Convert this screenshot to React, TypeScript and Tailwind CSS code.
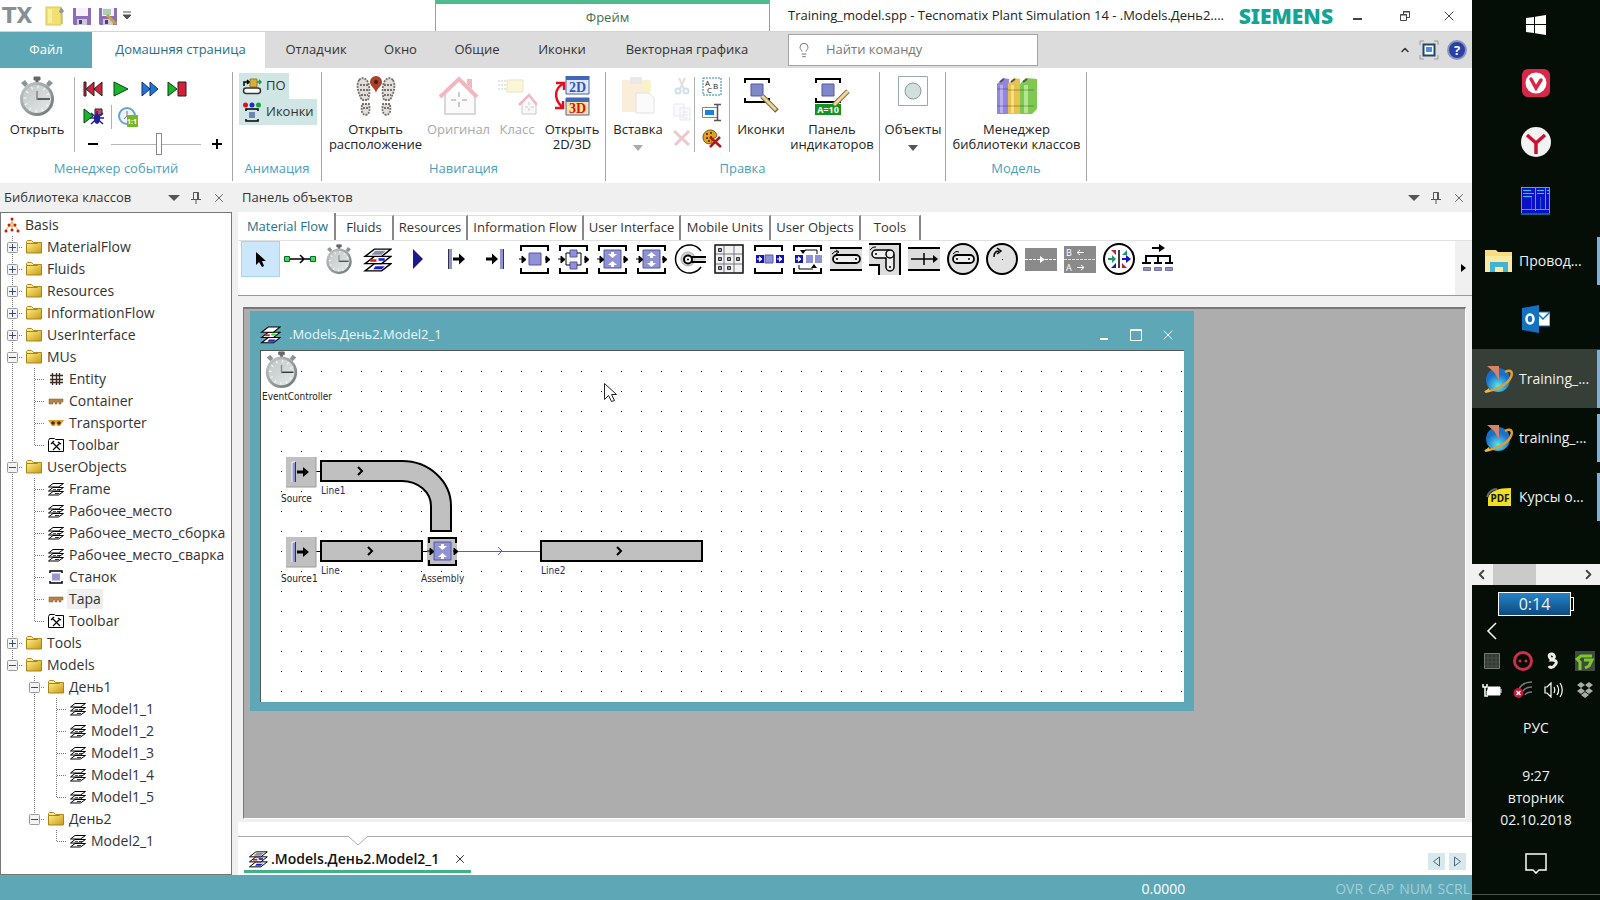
import type { ReactNode } from "react";
import { ChevronLeft, ChevronRight, ChevronUp, Lightbulb, X } from "lucide-react";

/* ---------- shared drawings ---------- */

function Stopwatch({ size }: { size: number }) {
  return (
    <svg width={size} height={size} viewBox="0 0 40 40" aria-hidden="true">
      <defs>
        <linearGradient id="dial" x1="0" y1="0" x2="1" y2="1">
          <stop offset="0" stopColor="#bcc5c4" />
          <stop offset="1" stopColor="#e6eae9" />
        </linearGradient>
        <linearGradient id="rim" x1="0" y1="0" x2="1" y2="1">
          <stop offset="0" stopColor="#c4cbca" />
          <stop offset="1" stopColor="#6c7575" />
        </linearGradient>
      </defs>
      <path d="M17 1h6v3h-2v4h-2V4h-2z" fill="#666" stroke="#666" />
      <path d="M4 7l4-3 3 4-3 3zM36 7l-4-3-3 4 3 3z" fill="#8d9494" />
      <circle cx="20" cy="23" r="15.5" fill="url(#dial)" stroke="url(#rim)" strokeWidth="3" />
      <circle cx="20" cy="23" r="12" fill="none" stroke="#f2f5f4" strokeDasharray="1.3 5" strokeWidth="3" />
      <path d="M20 23h13" stroke="#333" strokeWidth="1.5" />
      <path d="M20 24v-9" stroke="#888" strokeWidth="1.5" />
    </svg>
  );
}

function Layers({ width, light = false }: { width: number; light?: boolean }) {
  const sheet = (y: number) => `M11 ${y}h16l-9 7H2z`;
  return (
    <svg width={width} height={width} viewBox="0 0 28 28" aria-hidden="true">
      <g fill="#fff" stroke="#000" strokeWidth="1.4">
        <path d={sheet(18)} />
        <path d={sheet(11)} />
        <path d={sheet(4)} />
      </g>
      <path d="M12 20.500h9l-3 3h-8z" fill="#1a1ad0" />
      <path d="M7 15h6" stroke="#e02020" strokeWidth="2.5" />
      <path d="M15 14h6" stroke={light ? "#20e020" : "#2020d8"} strokeWidth="2.5" />
      {!light && <path d="M12 5.500h10l-4 4H8z" fill="#8a8aa0" />}
    </svg>
  );
}

function SmallLayers() {
  return (
    <svg width="16" height="16" viewBox="0 0 16 16" aria-hidden="true">
      <g fill="#fff" stroke="#000">
        <path d="M5 10.500h10.500l-5 3.500H.5z" />
        <path d="M5 6.500h10.500l-5 3.500H.5z" />
        <path d="M5 2.500h10.500l-5 3.500H.5z" />
      </g>
      <path d="M7 12.500h4" stroke="#1a1ae0" />
      <path d="M5 8.500h3" stroke="#e02020" />
      <path d="M9 8.500h3" stroke="#2020d8" />
    </svg>
  );
}

function FolderIcon() {
  return (
    <svg width="16" height="16" viewBox="0 0 16 16" aria-hidden="true">
      <defs>
        <linearGradient id="folder" x1="0" y1="0" x2="1" y2="1">
          <stop offset="0" stopColor="#fff08a" />
          <stop offset="1" stopColor="#c89a14" />
        </linearGradient>
      </defs>
      <path d="M.5 4.500V2.500l1-1h4l2 2h5v2" fill="#fbe98a" stroke="#b08a1c" />
      <path d="M.5 4.500h11l1-1h3v10.500H.5z" fill="url(#folder)" stroke="#a88418" />
    </svg>
  );
}

function Pin() {
  return (
    <svg width="12" height="14" viewBox="0 0 12 14" aria-hidden="true" fill="none" stroke="#555">
      <path d="M3.500 8V1.500h5V8M7.500 2v6M1 8.500h10M6 9v4" />
    </svg>
  );
}

function PanelButtons() {
  return (
    <div className="flex items-center gap-[10px] text-[#555]">
      <button aria-label="Меню">
        <svg width="12" height="6" viewBox="0 0 12 6"><path d="M0 0h12L6 6z" fill="#555" /></svg>
      </button>
      <button aria-label="Закрепить"><Pin /></button>
      <button aria-label="Закрыть"><X size={14} strokeWidth={1.5} /></button>
    </div>
  );
}

function Brackets({ children }: { children?: ReactNode }) {
  return (
    <>
      <path d="M3 8V3h27v5M3 25v5h27v-5" fill="none" stroke="#000" strokeWidth="2" />
      {children}
    </>
  );
}

function SideArrows() {
  return <path d="M1 16h5M27 16h4M4 13v7l4-3.500zM28 13v7l4-3.500z" fill="#000" stroke="#000" strokeWidth="1" />;
}

/* ---------- title bar ---------- */

function Floppy({ pencil = false }: { pencil?: boolean }) {
  return (
    <svg width="18" height="18" viewBox="0 0 18 18" aria-hidden="true">
      <path d="M0 1h18v17H1l-1-1z" fill="#8d6cb8" />
      <path d="M3 1h12v8H3z" fill="#f4f1fa" />
      {pencil && <path d="M4 3h8M4 5h8M4 7h8" stroke="#5dae6a" />}
      <path d="M4 12h10v6H4z" fill="#c9cbd6" />
      <path d="M6 13h3v4H6z" fill="#4d3c7d" />
      {pencil && <path d="M8 8l9 9" stroke="#c9a33c" strokeWidth="3" />}
    </svg>
  );
}

function TitleBar() {
  return (
    <header className="flex h-8 shrink-0 items-stretch border-b border-[#d4d4d4] bg-white">
      <div className="flex w-[435px] items-center">
        <svg width="36" height="30" viewBox="0 0 36 30" className="ml-px" role="img" aria-label="TX">
          <text x="1" y="22" fontSize="21" fontWeight="700" fontFamily="DejaVu Sans, sans-serif" fill="#858f96">TX</text>
        </svg>
        <button aria-label="Создать" className="ml-2">
          <svg width="20" height="20" viewBox="0 0 20 20">
            <path d="M1 1h15v18H1z" fill="#f1df72" stroke="#dcc65a" />
            <path d="M3 3h4v14H3z" fill="#f8ef9c" />
            <path d="M16 1l3 4-2 3-3-2z" fill="#8b9aa0" />
            <path d="M17 8v10" stroke="#b09a3b" />
          </svg>
        </button>
        <button aria-label="Сохранить" className="ml-2"><Floppy /></button>
        <button aria-label="Сохранить как" className="ml-2"><Floppy pencil /></button>
        <button aria-label="Настроить панель" className="ml-[6px]">
          <svg width="8" height="9" viewBox="0 0 8 9"><path d="M0 1h8M0 4h8L4 8z" fill="#555" stroke="#555" /></svg>
        </button>
      </div>
      <div className="flex w-[335px] items-center justify-center border-x border-t-4 border-x-[#5fbd97] border-t-[#4dbb8b] pl-[10px] text-[13px] text-[#41704f]">
        Фрейм
      </div>
      <div className="flex flex-1 items-center pl-[18px]">
        <h1 className="text-[13px] whitespace-nowrap text-[#222]">
          Training_model.spp - Tecnomatix Plant Simulation 14 - .Models.День2....
        </h1>
        <div className="ml-auto flex items-center">
          <span className="font-['Noto_Sans','Open_Sans',sans-serif] text-[21px] leading-5 font-black text-[#14a394]">SIEMENS</span>
          <button aria-label="Свернуть" className="ml-3 flex h-6 w-6 items-center justify-center">
            <svg width="9" height="12" viewBox="0 0 9 12"><path d="M0 9h9" stroke="#444" strokeWidth="2" /></svg>
          </button>
          <button aria-label="Восстановить" className="ml-6 flex h-6 w-6 items-center justify-center">
            <svg width="10" height="12" viewBox="0 0 10 12" fill="none" stroke="#444"><path d="M.5 4.500h6v6h-6zM3.500 4V1.500h6v6H7M3 2h7M0 5h7" /></svg>
          </button>
          <button aria-label="Закрыть" className="mr-[11px] ml-5 flex h-6 w-6 items-center justify-center text-[#444]">
            <X size={16} strokeWidth={1.5} />
          </button>
        </div>
      </div>
    </header>
  );
}

const ribbonTabs = [
  { label: "Отладчик", width: "w-[102px]" },
  { label: "Окно", width: "w-[67px]" },
  { label: "Общие", width: "w-[86px]" },
  { label: "Иконки", width: "w-[84px]" },
  { label: "Векторная графика", width: "w-[166px]" },
];

function RibbonTabs() {
  return (
    <nav className="flex h-9 shrink-0 items-stretch bg-[#dcdcdc] text-[13px] text-[#333]">
      <button className="w-[92px] bg-[#5ea7b6] text-white">Файл</button>
      <button className="w-[173px] bg-white pl-1 text-[#25708a]">Домашняя страница</button>
      {ribbonTabs.map((tab) => (
        <button key={tab.label} className={tab.width}>{tab.label}</button>
      ))}
      <label className="my-[2px] ml-[18px] flex w-[250px] items-center gap-[14px] border border-[#a3a3a3] bg-white pl-[7px]">
        <Lightbulb size={16} strokeWidth={1.5} color="#777" aria-label="Поиск" />
        <input className="w-48 outline-none placeholder:text-[#777]" placeholder="Найти команду" />
      </label>
      <div className="ml-auto flex items-center gap-2 pr-[5px]">
        <button aria-label="Свернуть ленту"><ChevronUp size={12} strokeWidth={3} /></button>
        <button aria-label="Полный экран">
          <svg width="20" height="20" viewBox="0 0 20 20">
            <path d="M1 5V1h4M15 1h4v4M19 15v4h-4M5 19H1v-4" fill="none" stroke="#999" />
            <path d="M4.500 4.500h11v11h-11z" fill="#fff" stroke="#23466e" strokeWidth="2" />
            <path d="M7 7h6v5H7z" fill="#4d8fd6" />
          </svg>
        </button>
        <button aria-label="Справка">
          <svg width="20" height="20" viewBox="0 0 20 20">
            <circle cx="10" cy="10" r="9" fill="#2b3fa8" stroke="#8797bd" strokeWidth="2" />
            <text x="10" y="15" fontSize="13" fontWeight="700" textAnchor="middle" fill="#fff">?</text>
          </svg>
        </button>
      </div>
    </nav>
  );
}

/* ---------- ribbon ---------- */

function Group({ label, width, children }: { label?: string; width: string; children: ReactNode }) {
  return (
    <section className={`flex h-[109px] flex-col border-r border-[#a6a6a6] ${width}`}>
      <div className="flex h-[85px]">{children}</div>
      <div className="flex h-6 items-center justify-center text-[13px] text-[#4a9fbd]">{label}</div>
    </section>
  );
}

interface BigButtonProps {
  icon: ReactNode;
  lines: string[];
  width: string;
  disabled?: boolean;
  dimmed?: boolean;
  arrow?: string;
}

function BigButton({ icon, lines, width, disabled, dimmed = disabled, arrow }: BigButtonProps) {
  return (
    <button disabled={disabled} className={`flex shrink-0 flex-col items-center pt-1 text-[13px] leading-[15px] whitespace-nowrap text-[#222] disabled:text-[#aaa] ${width}`}>
      <span className={dimmed ? "mb-[6px] flex h-10 items-center opacity-30" : "mb-[6px] flex h-10 items-center"}>{icon}</span>
      {lines.map((line) => <span key={line}>{line}</span>)}
      {arrow && <svg width="10" height="6" viewBox="0 0 10 6" className="mt-2"><path d="M0 0h10L5 6z" fill={arrow} /></svg>}
    </button>
  );
}

function Separator() {
  return <div className="mt-[5px] h-[75px] w-px shrink-0 bg-[#b0b0b0]" />;
}

const house = (
  <svg width="40" height="40" viewBox="0 0 40 40">
    <path d="M6 18v20h30V18" fill="#f5f5f5" stroke="#555" strokeWidth="1.5" />
    <path d="M1 21L20 3l18 18" fill="none" stroke="#d41734" strokeWidth="4" />
    <path d="M28 3h5v10l-5-5z" fill="#d41734" />
    <path d="M20 16v5M20 26v5M12 24h5M23 24h5" stroke="#555" strokeWidth="2" />
  </svg>
);

const classIcon = (
  <svg width="40" height="40" viewBox="0 0 40 40">
    <path d="M1 5h8M1 9h8M1 13h8" stroke="#aaa" strokeWidth="2" strokeDasharray="2 1" />
    <path d="M10 4h16v12H10z" fill="#f2e47c" stroke="#b8a544" />
    <path d="M25 26v12h14V26" fill="#eee" stroke="#555" />
    <path d="M22 29l10-10 8 10" fill="none" stroke="#c2183b" strokeWidth="2.5" />
    <path d="M32 26v3M32 32v3M28 31h3M34 31h3" stroke="#555" />
  </svg>
);

const footprints = (
  <svg width="40" height="40" viewBox="0 0 40 40">
    <g fill="#e2dedc" stroke="#77706d" strokeWidth="1.8" strokeDasharray="2 1">
      <path d="M3 4c4-4 9-1 10 6 1 7 0 11-1 14H6C2 17 0 9 3 4zM6 28h7c1 5 1 10-3 11-4 0-5-4-4-11zM37 4c-4-4-9-1-10 6-1 7 0 11 1 14h6c4-7 6-15 3-20zM34 28h-7c-1 5-1 10 3 11 4 0 5-4 4-11z" />
      <path d="M4 9h8M4 14h8M5 19h7M7 32h5M28 9h8M28 14h8M28 19h7M28 32h5" />
    </g>
    <path d="M20 17c-1-5-6-7-6-11a6 6 0 0112 0c0 4-5 6-6 11z" fill="#a8432a" />
    <circle cx="20" cy="6" r="2" fill="#4b1b12" />
  </svg>
);

const open2d3d = (
  <svg width="36" height="40" viewBox="0 0 36 40">
    <path d="M12 0h23v18H12z" fill="#e3e9f8" stroke="#4463ac" />
    <path d="M12 0h23v4H12z" fill="#3f68b8" />
    <path d="M12 22h23v17H12z" fill="#f8e3a0" stroke="#4463ac" />
    <path d="M12 22h23v4H12z" fill="#3f68b8" />
    <text x="23.5" y="16" fontSize="14" fontWeight="700" textAnchor="middle" fontFamily="Liberation Serif, serif" fill="#3358b8">2D</text>
    <text x="23.5" y="37" fontSize="14" fontWeight="700" textAnchor="middle" fontFamily="Liberation Serif, serif" fill="#e01010">3D</text>
    <path d="M9 8C1 12-1 22 8 31M2 7h8v7M1 32h8v-7" fill="none" stroke="#e01020" strokeWidth="2.5" />
  </svg>
);

const paste = (
  <svg width="34" height="40" viewBox="0 0 34 40">
    <path d="M1 4h28v32H1z" fill="#f0c888" />
    <path d="M9 1h12v7H9z" fill="#b8b8b8" />
    <path d="M22 5h8v10h-8z" fill="#e8d840" />
    <path d="M15 17h13l5 5v15H15z" fill="#f2f4f8" stroke="#98a0b0" />
  </svg>
);

function EditorIcon({ indicator = false }: { indicator?: boolean }) {
  return (
    <svg width="36" height="40" viewBox="0 0 36 40">
      <path d="M2 7V3h24v4M2 22v4h24v-4" fill="none" stroke="#000" strokeWidth="2" />
      <path d="M8 8h12v12H8z" fill="#8088c8" stroke="#5259a5" />
      {indicator ? (
        <>
          <path d="M1 28h26v11H1z" fill="#129422" />
          <text x="14" y="37" fontSize="9" fontWeight="700" textAnchor="middle" fill="#fff">A=10</text>
          <path d="M34 15L20 29" stroke="#8a6a3e" strokeWidth="5" />
          <path d="M34 15L20 29" stroke="#f0d79c" strokeWidth="3" />
        </>
      ) : (
        <>
          <path d="M19 20l15 15" stroke="#7a6436" strokeWidth="5" />
          <path d="M19 20l14 14" stroke="#ead59a" strokeWidth="3" />
        </>
      )}
    </svg>
  );
}

const books = (
  <svg width="42" height="38" viewBox="0 0 42 38">
    <path d="M1 7l6-6 6 1-1 35H1z" fill="#9386dc" />
    <path d="M4 8h3v28H4z" fill="#b9b0f0" />
    <path d="M12 7l6-6 6 1v35H12z" fill="#e6c24e" />
    <path d="M15 8h3v28h-3z" fill="#f6df8c" />
    <path d="M24 7l6-6 11 1v30l-5 5H24z" fill="#7fc852" />
    <path d="M28 8h4v28h-4z" fill="#b4e68e" />
    <path d="M4 5l4-3M15 5l4-3M27 5l4-3" stroke="#555" strokeWidth="2" />
    <path d="M1 12h11M1 29h11M12 13h12M12 29h12M24 13h14M24 29h14" stroke="#00000030" strokeWidth="1.5" />
  </svg>
);

function EventManager() {
  return (
    <Group label="Менеджер событий" width="w-[233px]">
      <BigButton icon={<Stopwatch size={40} />} lines={["Открыть"]} width="w-[74px]" />
      <Separator />
      <div className="flex flex-1 flex-col pl-2">
        <div className="mt-[8px] flex gap-2">
          <button aria-label="Сброс">
            <svg width="20" height="18" viewBox="0 0 20 18"><path d="M1 2h2v14H1zM3 9l8-7v14zM11 9l8-7v14z" fill="#d5203a" stroke="#222" /></svg>
          </button>
          <button aria-label="Пуск">
            <svg width="20" height="18" viewBox="0 0 20 18"><path d="M3 2l14 7-14 7z" fill="#14b82a" stroke="#123c16" /></svg>
          </button>
          <button aria-label="Быстро">
            <svg width="20" height="18" viewBox="0 0 20 18"><path d="M3 2l8 7-8 7zM11 2l8 7-8 7z" fill="#1e74d8" stroke="#12305c" /></svg>
          </button>
          <button aria-label="Шаг">
            <svg width="20" height="18" viewBox="0 0 20 18"><path d="M1 2l9 7-9 7z" fill="#14b82a" stroke="#123c16" /><path d="M11 2h8v14h-8z" fill="#d5203a" stroke="#222" /></svg>
          </button>
        </div>
        <div className="mt-[7px] flex h-6 items-center">
          <button aria-label="Отладка">
            <svg width="22" height="18" viewBox="0 0 22 18">
              <path d="M1 1l9 7-9 7z" fill="#14b82a" stroke="#123c16" />
              <path d="M12 1h7v6h-7z" fill="#d5405a" stroke="#222" />
              <path d="M8 5l12 11M20 5L8 16M7 10h14M14 3v3" stroke="#20209a" strokeWidth="1.5" />
              <ellipse cx="14" cy="11" rx="3" ry="5" fill="#20209a" />
            </svg>
          </button>
          <div className="mx-[6px] h-6 w-px bg-[#b0b0b0]" />
          <button aria-label="Реальное время">
            <svg width="20" height="20" viewBox="0 0 20 20">
              <circle cx="9" cy="9" r="8" fill="#eef5f8" stroke="#6aa3cd" strokeWidth="2" />
              <path d="M9 4v5l-3 3" fill="none" stroke="#777" />
              <path d="M9 8h11v12H9z" fill="#76b82a" />
              <text x="14" y="17" fontSize="7" fontWeight="700" textAnchor="middle" fill="#fff">1:1</text>
            </svg>
          </button>
        </div>
        <div className="mt-[3px] flex h-6 items-center">
          <button aria-label="Медленнее" className="flex w-5 justify-center"><svg width="10" height="2"><path d="M0 1h10" stroke="#000" strokeWidth="2" /></svg></button>
          <input
            type="range"
            aria-label="Скорость"
            defaultValue={54}
            className="ml-2 h-[22px] w-[90px] appearance-none bg-[linear-gradient(#b4b4b4,#b4b4b4)] bg-[length:100%_1px] bg-center bg-no-repeat [&::-webkit-slider-thumb]:h-[22px] [&::-webkit-slider-thumb]:w-[6px] [&::-webkit-slider-thumb]:appearance-none [&::-webkit-slider-thumb]:border [&::-webkit-slider-thumb]:border-[#888] [&::-webkit-slider-thumb]:bg-white"
          />
          <button aria-label="Быстрее" className="ml-[10px]"><svg width="12" height="12"><path d="M1 6h10M6 1v10" stroke="#000" strokeWidth="2" /></svg></button>
        </div>
      </div>
    </Group>
  );
}

function Ribbon() {
  return (
    <div className="flex h-[115px] shrink-0 bg-white pt-1">
      <EventManager />
      <Group label="Анимация" width="w-[89px]">
        <div className="mt-px ml-[6px] flex flex-col items-start text-[13px] text-[#333]">
          <button aria-pressed="true" className="flex h-[26px] items-center gap-1 bg-[#cfe6e5] px-[3px]">
            <svg width="20" height="18" viewBox="0 0 20 18">
              <path d="M8 2h7v8H8z" fill="#d6b03c" stroke="#9a7a20" />
              <path d="M2 9V5h5M5 3l2 2-2 2" fill="none" stroke="#000" strokeWidth="1.5" />
              <path d="M15 5h4M17 3l2 2-2 2" fill="none" stroke="#1a9850" strokeWidth="1.5" />
              <rect x="1.5" y="11" width="17" height="5.5" rx="2.7" fill="#fff" stroke="#333" strokeWidth="1.5" />
            </svg>
            ПО
          </button>
          <button aria-pressed="true" className="flex h-[26px] items-center gap-1 bg-[#cfe6e5] px-[3px]">
            <svg width="20" height="20" viewBox="0 0 20 20">
              <circle cx="3.5" cy="3" r="2.5" fill="#e01020" />
              <circle cx="10" cy="3" r="2.5" fill="#1430d0" />
              <circle cx="16.5" cy="3" r="2.5" fill="#12a83a" />
              <path d="M4 9V7h12v2M4 17v2h12v-2" fill="none" stroke="#000" strokeWidth="1.5" />
              <path d="M7 10h6v6H7z" fill="#6a86b8" />
            </svg>
            Иконки
          </button>
        </div>
      </Group>
      <Group label="Навигация" width="w-[284px]">
        <BigButton icon={footprints} lines={["Открыть", "расположение"]} width="w-[107px]" />
        <BigButton icon={house} lines={["Оригинал"]} width="w-[59px]" disabled />
        <BigButton icon={classIcon} lines={["Класс"]} width="w-[58px]" disabled />
        <BigButton icon={open2d3d} lines={["Открыть", "2D/3D"]} width="w-[52px]" />
      </Group>
      <Group label="Правка" width="w-[274px]">
        <BigButton icon={paste} lines={["Вставка"]} width="w-16" dimmed arrow="#aaa" />
        <div className="flex w-6 flex-col items-center gap-2 pt-[5px] opacity-25">
          <button disabled aria-label="Вырезать">
            <svg width="16" height="18" viewBox="0 0 16 18" fill="none" stroke="#3c8fb8" strokeWidth="2"><path d="M5 1l5 11M11 1L6 12" stroke="#888" /><circle cx="4" cy="14" r="2.5" /><circle cx="12" cy="14" r="2.5" /></svg>
          </button>
          <button disabled aria-label="Копировать">
            <svg width="18" height="18" viewBox="0 0 18 18" fill="#eef" stroke="#aab"><path d="M1 1h10v12H1zM7 5h10v12H7zM9 9h6M9 12h6M9 15h6" /></svg>
          </button>
          <button disabled aria-label="Удалить">
            <svg width="18" height="18" viewBox="0 0 18 18"><path d="M1 2l15 14M16 2L2 16" stroke="#c02038" strokeWidth="3" /></svg>
          </button>
        </div>
        <Separator />
        <div className="flex w-[34px] flex-col items-center gap-[7px] pt-[5px]">
          <button aria-label="Выделить всё">
            <svg width="20" height="19" viewBox="0 0 20 19">
              <path d="M1 1h18v17H1z" fill="#fff" stroke="#2388a0" strokeDasharray="2 1" />
              <text x="3" y="9" fontSize="8" fill="#222">A</text>
              <text x="11" y="12" fontSize="8" fill="#222">B</text>
              <text x="5" y="16" fontSize="8" fill="#222">C</text>
            </svg>
          </button>
          <button aria-label="Переименовать">
            <svg width="20" height="19" viewBox="0 0 20 19">
              <path d="M.5 4.500h15v10H.5z" fill="#fff" stroke="#789" />
              <path d="M3 7h9v5H3z" fill="#1583e0" />
              <path d="M12 1.500h7M12 17.500h7M15.500 2v15" stroke="#555" strokeWidth="1.5" />
            </svg>
          </button>
          <button aria-label="Очистить">
            <svg width="20" height="19" viewBox="0 0 20 19">
              <path d="M1 8C1 3 7-1 12 2c4 3 3 6 1 7-3 0-3 2-3 5-4 2-9 0-9-6z" fill="#d9a520" stroke="#7c5a10" />
              <path d="M4 5h2M8 4h2M4 9h2M8 8h2M6 12h2" stroke="#8a3010" strokeWidth="2" />
              <path d="M8 8l11 10M18 8L8 18" stroke="#b01818" strokeWidth="2.5" />
            </svg>
          </button>
        </div>
        <Separator />
        <BigButton icon={<EditorIcon />} lines={["Иконки"]} width="w-[62px]" />
        <BigButton icon={<EditorIcon indicator />} lines={["Панель", "индикаторов"]} width="w-[80px]" />
      </Group>
      <Group width="w-[66px]">
        <BigButton
          icon={
            <svg width="30" height="30" viewBox="0 0 30 30" className="mb-[10px]">
              <path d="M.5.5h29v29H.5z" fill="#fff" stroke="#9aa" />
              <circle cx="15" cy="15" r="8" fill="#d0e0dc" stroke="#8a9a98" />
            </svg>
          }
          lines={["Объекты"]}
          width="w-[66px]"
          arrow="#555"
        />
      </Group>
      <Group label="Модель" width="w-[141px]">
        <BigButton icon={books} lines={["Менеджер", "библиотеки классов"]} width="w-[141px]" />
      </Group>
    </div>
  );
}

/* ---------- class library tree ---------- */

type IconKind = "folder" | "frame" | "entity" | "container" | "transporter" | "toolbar" | "station" | "basis";

interface TreeRow {
  // one guide character per level: | through, T branch, L last branch, space nothing
  guides: string;
  icon: IconKind;
  label: string;
  box?: "+" | "-";
  selected?: boolean;
}

const tree: TreeRow[] = [
  { guides: "", icon: "basis", label: "Basis" },
  { guides: "T", icon: "folder", label: "MaterialFlow", box: "+" },
  { guides: "T", icon: "folder", label: "Fluids", box: "+" },
  { guides: "T", icon: "folder", label: "Resources", box: "+" },
  { guides: "T", icon: "folder", label: "InformationFlow", box: "+" },
  { guides: "T", icon: "folder", label: "UserInterface", box: "+" },
  { guides: "T", icon: "folder", label: "MUs", box: "-" },
  { guides: "|T", icon: "entity", label: "Entity" },
  { guides: "|T", icon: "container", label: "Container" },
  { guides: "|T", icon: "transporter", label: "Transporter" },
  { guides: "|L", icon: "toolbar", label: "Toolbar" },
  { guides: "T", icon: "folder", label: "UserObjects", box: "-" },
  { guides: "|T", icon: "frame", label: "Frame" },
  { guides: "|T", icon: "frame", label: "Рабочее_место" },
  { guides: "|T", icon: "frame", label: "Рабочее_место_сборка" },
  { guides: "|T", icon: "frame", label: "Рабочее_место_сварка" },
  { guides: "|T", icon: "station", label: "Станок" },
  { guides: "|T", icon: "container", label: "Тара", selected: true },
  { guides: "|L", icon: "toolbar", label: "Toolbar" },
  { guides: "T", icon: "folder", label: "Tools", box: "+" },
  { guides: "L", icon: "folder", label: "Models", box: "-" },
  { guides: " T", icon: "folder", label: "День1", box: "-" },
  { guides: " |T", icon: "frame", label: "Model1_1" },
  { guides: " |T", icon: "frame", label: "Model1_2" },
  { guides: " |T", icon: "frame", label: "Model1_3" },
  { guides: " |T", icon: "frame", label: "Model1_4" },
  { guides: " |L", icon: "frame", label: "Model1_5" },
  { guides: " L", icon: "folder", label: "День2", box: "-" },
  { guides: "  L", icon: "frame", label: "Model2_1" },
];

function TreeIcon({ kind }: { kind: IconKind }) {
  switch (kind) {
    case "folder":
      return <FolderIcon />;
    case "frame":
      return <SmallLayers />;
    case "entity":
      return <svg width="16" height="16" viewBox="0 0 16 16"><path d="M4.500 2v12M8.500 2v12M11.500 2v12M2 4.500h13M2 8.500h13M2 11.500h13" stroke="#3a2a22" strokeWidth="1.3" /></svg>;
    case "container":
      return <svg width="16" height="16" viewBox="0 0 16 16"><path d="M1 6h14v3h-2v2h-2V9H9v2H7V9H5v2H1z" fill="#b88444" stroke="#7a5222" strokeWidth=".5" /></svg>;
    case "transporter":
      return (
        <svg width="16" height="16" viewBox="0 0 16 16">
          <path d="M0 5h16l-2 3-2 3H9L8 8 7 11H4L2 8z" fill="#e0a030" />
          <circle cx="5" cy="8" r="1.8" fill="#4a2a10" />
          <circle cx="11" cy="8" r="1.8" fill="#4a2a10" />
        </svg>
      );
    case "toolbar":
      return (
        <svg width="16" height="16" viewBox="0 0 16 16">
          <path d="M.5 3.500l1-2h5l1 1h8v12H.5z" fill="#fff" stroke="#000" />
          <path d="M4 5l8 8M12 6l-7 7M3 7l3-3M10 5l3 2" fill="none" stroke="#000" strokeWidth="1.2" />
        </svg>
      );
    case "station":
      return (
        <svg width="16" height="16" viewBox="0 0 16 16">
          <path d="M2 4V2h12v2M2 12v2h12v-2" fill="none" stroke="#000" strokeWidth="1.5" />
          <path d="M4 4.500h8v7H4z" fill="#9a98cc" />
        </svg>
      );
    case "basis":
      return (
        <svg width="16" height="16" viewBox="0 0 16 16">
          <path d="M8 2v12M8 5L2 13M8 5l6 8M5 9h6" stroke="#d0b040" />
          <g fill="#c81818">
            <circle cx="8" cy="2" r="1.5" />
            <circle cx="5" cy="8" r="1.5" />
            <circle cx="11" cy="8" r="1.5" />
            <circle cx="2" cy="14" r="1.5" />
            <circle cx="8" cy="13" r="1.5" />
            <circle cx="14" cy="14" r="1.5" />
          </g>
        </svg>
      );
  }
}

function Guide({ kind, box }: { kind: string; box?: "+" | "-" }) {
  return (
    <svg width="22" height="22" viewBox="0 0 22 22" className="shrink-0" aria-hidden="true">
      <g stroke="#777" strokeDasharray="1 1">
        {kind !== " " && <path d={kind === "L" ? "M11.500 0v11" : "M11.500 0v22"} />}
        {(kind === "T" || kind === "L") && <path d="M12 11.500h10" />}
      </g>
      {box && (
        <>
          <rect x="6.5" y="6.5" width="10" height="10" rx="1" fill="#f4f4f4" stroke="#999" />
          <path d={box === "+" ? "M8 11.500h7M11.500 8v7" : "M8 11.500h7"} stroke="#334a8a" />
        </>
      )}
    </svg>
  );
}

function ClassLibrary() {
  return (
    <aside className="flex w-[232px] shrink-0 flex-col">
      <div className="flex h-[29px] items-center justify-between pr-[6px] pl-1">
        <h2 className="text-[13px] text-[#333]">Библиотека классов</h2>
        <PanelButtons />
      </div>
      <ul className="flex-1 overflow-hidden border border-[#777] bg-white pt-px text-[14px] text-[#333]">
        {tree.map((row, i) => (
          <li key={i} className="flex h-[22px] items-center">
            {row.guides.split("").map((g, n) => (
              <Guide key={n} kind={g} box={n === row.guides.length - 1 ? row.box : undefined} />
            ))}
            <button className="ml-[3px] flex items-center gap-[3px] whitespace-nowrap">
              <TreeIcon kind={row.icon} />
              <span className={row.selected ? "bg-[#efefef] px-[2px] leading-5" : "px-[2px] leading-5"}>{row.label}</span>
            </button>
          </li>
        ))}
      </ul>
    </aside>
  );
}

/* ---------- toolbox ---------- */

const toolboxTabs = [
  { label: "Fluids", width: "w-[58px]" },
  { label: "Resources", width: "w-[74px]" },
  { label: "Information Flow", width: "w-[116px]" },
  { label: "User Interface", width: "w-[97px]" },
  { label: "Mobile Units", width: "w-[90px]" },
  { label: "User Objects", width: "w-[90px]" },
  { label: "Tools", width: "w-[60px]" },
];

const blue = "#8f93d2";

const assemblyArt = (
  <Brackets>
    <path d="M8 7h17v18H8z" fill={blue} stroke="#55a" />
    <path d="M15 9h3v2h3l-4.500 4-4.500-4h3zM15 24h3v-2h3l-4.500-4-4.500 4h3z" fill="#fff" />
    <SideArrows />
  </Brackets>
);

const tools: { name: string; art: ReactNode }[] = [
  { name: "Select", art: <path d="M11 9v13l3-3 3 5 2-1-2-5h4z" fill="#000" /> },
  { name: "Connector", art: <><path d="M4 16h24M16 12l4 4-4 4" fill="none" stroke="#000" strokeWidth="1.5" /><path d="M.5 13.500h5v5h-5zM26.500 13.500h5v5h-5z" fill="#40e040" stroke="#064" /></> },
  { name: "EventController", art: null },
  { name: "Frame", art: null },
  { name: "Interface", art: <path d="M12 6l10 10-10 10z" fill="#1b1b8c" /> },
  { name: "Source", art: <><path d="M8 6h4v20H8z" fill={blue} /><path d="M8.500 6v20" stroke="#334" /><path d="M13 14.500h6v-4l6 5.500-6 5.500v-4h-6z" fill="#000" /></> },
  { name: "Drain", art: <><path d="M21 6h4v20h-4z" fill={blue} /><path d="M24.500 6v20" stroke="#334" /><path d="M7 14.500h6v-4l6 5.500-6 5.500v-4H7z" fill="#000" /></> },
  { name: "SingleProc", art: <Brackets><path d="M11 10h12v12H11z" fill={blue} stroke="#55a" /><SideArrows /></Brackets> },
  { name: "ParallelProc", art: <Brackets><path d="M13 7h7v7h-7zM13 19h7v7h-7z" fill={blue} stroke="#55a" /><path d="M13 10H9v12h4M20 10h4v12h-4" fill="none" stroke="#000" /><SideArrows /></Brackets> },
  { name: "Assembly", art: assemblyArt },
  { name: "Dismantle", art: <Brackets><path d="M8 7h17v18H8z" fill={blue} stroke="#55a" /><path d="M15 15h3v-2h3l-4.500-4-4.500 4h3zM15 18h3v2h3l-4.500 4-4.500-4h3z" fill="#fff" /><SideArrows /></Brackets> },
  { name: "PickAndPlace", art: <><path d="M27 8a14 14 0 100 16" fill="none" stroke="#000" strokeWidth="1.5" /><circle cx="14" cy="16" r="7" fill="#d4d4d4" stroke="#aaa" /><path d="M15 14h17M15 19h17" stroke="#000" strokeWidth="2" /><path d="M18 16.500h14" stroke="#ccc" strokeWidth="2" /><circle cx="14" cy="16.500" r="4" fill="#fff" stroke="#000" strokeWidth="2" /><circle cx="14" cy="16.500" r="1" /></> },
  { name: "Store", art: <><path d="M2 2h28v28H2zM11 2v28M21 2v28M2 11h28M2 21h28" fill="#f2f2f2" stroke="#777" /><path d="M2 2h28v28H2z" fill="none" stroke="#222" strokeWidth="1.5" /><path d="M5.500 5.500h3v3h-3zM5.500 14.500h3v3h-3zM14.500 14.500h3v3h-3zM23.500 14.500h3v3h-3zM5.500 23.500h3v3h-3zM14.500 23.500h3v3h-3z" fill={blue} stroke="#333" /></> },
  { name: "Buffer", art: <Brackets><path d="M4 12h8v8H4zM24 12h8v8h-8z" fill="#1414b8" /><path d="M13 12h8v8h-8z" fill={blue} stroke="#55a" /><path d="M5 16h4M7 13.500l3 2.500-3 2.500M25 16h4M27 13.500l3 2.500-3 2.500" stroke="#fff" fill="#fff" /></Brackets> },
  { name: "Sorter", art: <Brackets><path d="M4 12h8v8H4z" fill="#1414b8" /><path d="M15 12h7v8h-7zM24 12h7v8h-7z" fill={blue} /><path d="M5 16h4M7 13.500l3 2.500-3 2.500" stroke="#fff" fill="#fff" /><path d="M26 11V7H14M8 22v4h14" fill="none" stroke="#000" /><path d="M9 7h6l-3 4zM20 25h6l-3-4z" /></Brackets> },
  { name: "Line", art: <><path d="M0 5h32v22H0z" fill="#ddd" /><path d="M0 5h32M0 27h32" stroke="#000" strokeWidth="2" /><rect x="3" y="12" width="27" height="8" rx="4" fill="#eee" stroke="#000" strokeWidth="1.8" /><circle cx="7" cy="16" r="1" /><circle cx="26" cy="16" r="1" /><path d="M2 11q3-4 6-2M6 7l3 2-3 2" fill="none" stroke="#000" /></> },
  { name: "AngularConverter", art: <><path d="M0 1h31v31H10V22H0z" fill="#ddd" /><path d="M0 1h31v31M0 22h10v10" fill="none" stroke="#000" strokeWidth="2" /><path d="M20 7H7a4 4 0 000 8h10v9a4 4 0 008 0V12" fill="#eee" stroke="#000" strokeWidth="1.5" /><circle cx="21" cy="11" r="4" fill="#eee" stroke="#000" strokeWidth="1.5" /><circle cx="21" cy="24" r="1" /><circle cx="7" cy="11" r="1" /><path d="M1 7q3-4 6-3" fill="none" stroke="#000" /></> },
  { name: "Converter", art: <><path d="M0 5h32v22H0z" fill="#ddd" /><path d="M0 5h32M0 27h32" stroke="#000" strokeWidth="2" /><path d="M3 16h24M16 10v12" stroke="#000" strokeWidth="1.5" /><path d="M25 12l5 4-5 4z" /></> },
  { name: "Turntable", art: <><circle cx="16" cy="16" r="15" fill="#e2e2e2" stroke="#000" strokeWidth="2" /><rect x="6" y="12" width="21" height="8" rx="4" fill="#eee" stroke="#000" strokeWidth="1.8" /><circle cx="10" cy="16" r="1" /><circle cx="22" cy="16" r="1" /><path d="M6 11q3-4 6-2" fill="none" stroke="#000" /></> },
  { name: "Turnplate", art: <><circle cx="16" cy="16" r="15" fill="#e2e2e2" stroke="#000" strokeWidth="2" /><path d="M8 14q0-6 5-6M11 5l4 3-4 3" fill="none" stroke="#000" strokeWidth="1.5" /><path d="M16 16.500h1" stroke="#000" /></> },
  { name: "Track", art: <><path d="M0 5h32v23H0z" fill="#8a8a8a" /><path d="M0 16.500h32" stroke="#fff" strokeDasharray="3 1" /><path d="M15 13v7l5-3.500z" fill="#fff" /></> },
  { name: "TwoLaneTrack", art: <><path d="M0 3h32v27H0z" fill="#8a8a8a" /><path d="M0 16.500h32" stroke="#ddd" strokeDasharray="3 1" /><text x="2" y="13" fontSize="9" fill="#fff">B</text><text x="2" y="28" fontSize="9" fill="#fff">A</text><path d="M13 9.500h7M16 7l-3 2.500 3 2.500M13 24.500h7M17 22l3 2.500-3 2.500" fill="none" stroke="#fff" /></> },
  { name: "FlowControl", art: <><circle cx="16" cy="16" r="15" fill="#fff" stroke="#000" strokeWidth="2" /><path d="M16 7v18" stroke="#000" strokeWidth="1.5" /><path d="M8 7h5v5zM19 20l5 5h-5z" fill="#c82030" /><path d="M5 15h4v-3l4 4-4 4v-3H5zM19 12l5-5v5z" fill="#169a6a" /><path d="M8 25l5-5v5zM19 15h4v-3l5 4-5 4v-3h-4z" fill="#1414c8" /></> },
  { name: "TransferStation", art: <><path d="M10 4h7V1l6 4-6 4V6h-7z" /><path d="M4 20v-7h24v7M16 13v7" fill="none" stroke="#000" strokeWidth="2" /><path d="M0 20h9M12 20h8M23 20h8" stroke="#000" strokeWidth="2" /><path d="M1.500 24.500h7v3h-7zM12.500 24.500h7v3h-7zM23.500 24.500h7v3h-7z" fill={blue} stroke="#778" /></> },
];

function Toolbox() {
  return (
    <section className="flex shrink-0 flex-col">
      <div className="flex h-[29px] items-center justify-between pr-[6px] pl-1">
        <h2 className="text-[13px] text-[#333]">Панель объектов</h2>
        <PanelButtons />
      </div>
      <div role="tablist" className="flex h-[29px] items-end border-b border-[#e0e0e0] bg-white pl-[3px] text-[13px] text-[#333]">
        <button role="tab" aria-selected="true" className="h-[27px] w-[95px] border-r-2 border-[#888] text-[#25708a]">Material Flow</button>
        {toolboxTabs.map((tab) => (
          <button key={tab.label} role="tab" className={`h-[25px] border-t border-r-2 border-t-[#ddd] border-r-[#888] whitespace-nowrap ${tab.width}`}>
            {tab.label}
          </button>
        ))}
      </div>
      <div className="flex h-[55px] border-b border-[#999] bg-white">
        <div className="flex flex-1 items-start pl-[3px]">
          {tools.map((tool, i) => (
            <button
              key={tool.name}
              aria-label={tool.name}
              className={i === 0 ? "flex h-9 w-[39px] items-center justify-center border border-[#a8d4f4] bg-[#cce6fc]" : "flex h-9 w-[39px] items-center justify-center"}
            >
              {tool.name === "EventController" && <Stopwatch size={30} />}
              {tool.name === "Frame" && <Layers width={29} />}
              {tool.art && <svg width="32" height="32" viewBox="0 0 32 32">{tool.art}</svg>}
            </button>
          ))}
        </div>
        <button aria-label="Прокрутить вправо" className="flex w-[17px] items-center justify-center bg-[#f0f0f0]">
          <svg width="5" height="8" viewBox="0 0 5 8"><path d="M0 0v8l5-4z" /></svg>
        </button>
      </div>
    </section>
  );
}

/* ---------- model window ---------- */

function Chevron({ x, y, color = "#000", width = 2 }: { x: number; y: number; color?: string; width?: number }) {
  return <path d={`M${x - 2} ${y - 4}l4 4-4 4`} fill="none" stroke={color} strokeWidth={width} />;
}

function SourceNode({ x, y }: { x: number; y: number }) {
  return (
    <g transform={`translate(${x} ${y})`}>
      <path d="M0 0h30v30H0z" fill="#c0c0c0" />
      <path d="M0 30h30V0" fill="none" stroke="#9a9a9a" />
      <path d="M6 5h4v20H6z" fill={blue} />
      <path d="M6 25V5h3" fill="none" stroke="#fff" />
      <path d="M9.500 5v20" stroke="#334" />
      <path d="M11 13.500h6V10l6 5-6 5v-3.500h-6z" />
    </g>
  );
}

const labels = [
  { text: "EventController", x: 1, y: 49, width: 76, color: "#222" },
  { text: "Source", x: 20, y: 151, width: 34, color: "#222" },
  { text: "Line1", x: 60, y: 143, width: 27, color: "#2c2c70" },
  { text: "Source1", x: 20, y: 231, width: 40, color: "#222" },
  { text: "Line", x: 60, y: 223, width: 19, color: "#2c2c70" },
  { text: "Assembly", x: 160, y: 231, width: 46, color: "#2c2c40" },
  { text: "Line2", x: 280, y: 223, width: 27, color: "#2c2c70" },
];

function ModelCanvas() {
  return (
    <svg className="h-full w-full" role="img" aria-label="Model2_1">
      <defs>
        <pattern id="dots" width="20" height="20" patternUnits="userSpaceOnUse"><path d="M0 0h1v1H0z" fill="#111" /></pattern>
      </defs>
      <rect x="20" y="20" width="100%" height="100%" fill="url(#dots)" />
      {labels.map((l) => <rect key={l.text} x={l.x} y={l.y - 9} width={l.width} height="11" fill="#fff" />)}
      <path d="M3 2h34v34H3z" fill="#fff" />
      <g transform="translate(2 0)"><Stopwatch size={37} /></g>
      <path d="M55 120.500h5M55 200.500h5M161 200.500h5" stroke="#000" />
      <SourceNode x={25} y={106} />
      <SourceNode x={25} y={186} />
      <g fill="#c0c0c0" stroke="#000" strokeWidth="2">
        <path d="M60 110h81a49 45 0 0149 45v25h-20v-25a29 25 0 00-29-25H60z" />
        <path d="M60 190h101v20H60z" />
        <path d="M280 190h161v20H280z" />
      </g>
      <path d="M196 200.500h83" stroke="#4f65b4" />
      <Chevron x={99} y={120} />
      <Chevron x={109} y={200} />
      <Chevron x={358} y={200} />
      <Chevron x={239} y={200} color="#4f65b4" width={1} />
      <g transform="translate(165 184)">
        <path d="M1 2h30v29H1z" fill="#c0c0c0" />
        {assemblyArt}
      </g>
      <g fontSize="10" fontFamily="DejaVu Sans Condensed, DejaVu Sans, sans-serif">
        {labels.map((l) => <text key={l.text} x={l.x} y={l.y} fill={l.color}>{l.text}</text>)}
      </g>
      <path d="M343.500 32.500v16l4-4 3 6 3-1-3-6h5z" fill="#fff" stroke="#222" />
    </svg>
  );
}

function ModelWindow() {
  return (
    <div className="absolute top-[2px] left-[6px] flex h-[400px] w-[944px] flex-col bg-[#5ea7b6] px-[10px] pb-[9px] text-white">
      <div className="flex h-[39px] shrink-0 items-center pt-2">
        <Layers width={21} light />
        <span className="ml-2 text-[13px] text-[#eaf7fa]">.Models.День2.Model2_1</span>
        <div className="ml-auto flex items-center gap-2">
          <button aria-label="Свернуть" className="flex h-6 w-6 items-center justify-center"><svg width="8" height="10"><path d="M0 9h8" stroke="#fff" strokeWidth="2" /></svg></button>
          <button aria-label="Развернуть" className="flex h-6 w-6 items-center justify-center"><svg width="12" height="12" fill="none" stroke="#fff"><path d="M.5.5h11v11H.5zM0 1.500h12" /></svg></button>
          <button aria-label="Закрыть" className="mr-1 flex h-6 w-6 items-center justify-center"><X size={16} strokeWidth={1.5} /></button>
        </div>
      </div>
      <div className="min-h-0 flex-1 border-t border-l border-[#555] bg-white">
        <ModelCanvas />
      </div>
    </div>
  );
}

function Workspace() {
  return (
    <main className="flex min-w-0 flex-1 flex-col pl-[6px]">
      <Toolbox />
      <div className="relative mt-[11px] mr-[6px] mb-[3px] ml-[5px] flex-1 border border-t-2 border-[#777] border-r-white border-b-white bg-[#adadad]">
        <ModelWindow />
      </div>
      <div className="h-[14px] shrink-0 bg-white" />
      <div className="relative flex h-[39px] shrink-0 items-start border-t border-[#aaa] bg-white px-[6px]">
        <svg width="20" height="10" viewBox="0 0 20 10" className="absolute -top-px left-[110px]"><path d="M0 0l10 9L20 0" fill="#fff" stroke="#aaa" /></svg>
        <div className="flex h-9 items-center border-b-3 border-[#3fb286] px-1 pt-[10px] text-[#111]">
          <Layers width={20} />
          <span className="ml-[3px] text-[14px] font-semibold whitespace-nowrap">.Models.День2.Model2_1</span>
          <button aria-label="Закрыть вкладку" className="ml-[14px]"><X size={14} strokeWidth={1.5} /></button>
        </div>
        <div className="ml-auto flex gap-1 pt-4">
          <button aria-label="Назад" className="flex size-[17px] items-center justify-center bg-[#d6e9ec]"><svg width="7" height="11" viewBox="0 0 7 11"><path d="M6.500 1v9l-6-4.500z" fill="none" stroke="#567" /></svg></button>
          <button aria-label="Вперёд" className="flex size-[17px] items-center justify-center bg-[#d6e9ec]"><svg width="7" height="11" viewBox="0 0 7 11"><path d="M.5 1v9l6-4.500z" fill="none" stroke="#567" /></svg></button>
        </div>
      </div>
    </main>
  );
}

/* ---------- desktop taskbar ---------- */

const planet = (
  <svg width="30" height="28" viewBox="0 0 30 28" aria-hidden="true">
    <defs>
      <radialGradient id="globe" cx=".5" cy=".75">
        <stop offset="0" stopColor="#5fe8e8" />
        <stop offset="1" stopColor="#1a70c8" />
      </radialGradient>
    </defs>
    <circle cx="14" cy="15" r="12" fill="url(#globe)" />
    <path d="M3 1h12v14l-5-8z" fill="#d88468" />
    <path d="M21 7c6-3 8 0 6 5-3 8-16 13-26 15" fill="none" stroke="#e0a030" strokeWidth="2.5" />
    <path d="M0 27l5-4 1 4z" fill="#f0b840" />
  </svg>
);

const running: { label: string; icon: ReactNode; active?: boolean }[] = [
  { label: "Training_...", icon: planet, active: true },
  { label: "training_...", icon: planet },
  {
    label: "Курсы о...",
    icon: (
      <svg width="30" height="22" viewBox="0 0 30 22" aria-hidden="true">
        <path d="M4 20V12C6 5 14 2 27 2v18z" fill="#f0e020" />
        <path d="M3 11C5 5 8 3 13 3" fill="none" stroke="#667" strokeWidth="2" />
        <text x="16" y="16" fontSize="10" fontWeight="700" textAnchor="middle" fill="#111">PDF</text>
      </svg>
    ),
  },
];

function PinnedApp({ label, children }: { label: string; children: ReactNode }) {
  return <button aria-label={label} className="flex h-[59px] items-center justify-center pb-[2px]">{children}</button>;
}

function RunningApp({ label, icon, active = false }: { label: string; icon: ReactNode; active?: boolean }) {
  return (
    <button className={active ? "flex h-[59px] items-center bg-[#353e37] pl-3" : "flex h-[59px] items-center pl-3"}>
      <span className="flex w-[35px] items-center">{icon}</span>
      <span className="text-[14px] whitespace-nowrap">{label}</span>
      <span className={active ? "ml-auto h-[58px] w-[3px] bg-[#7fb0dc]" : "ml-auto h-12 w-[3px] bg-[#7fb0dc]"} />
    </button>
  );
}

function Taskbar() {
  return (
    <aside className="flex w-32 shrink-0 flex-col bg-[#040d06] text-[#eef2ee]">
      <button aria-label="Пуск" className="flex h-[54px] items-center justify-center pb-1">
        <svg width="20" height="20" viewBox="0 0 20 20" fill="#fff"><path d="M0 3l8-1v7H0zM9 1.700L20 0v9H9zM0 10h8v8l-8-1zM9 10h11v10L9 18.300z" /></svg>
      </button>
      <PinnedApp label="Vivaldi">
        <svg width="28" height="28" viewBox="0 0 28 28">
          <rect width="28" height="28" rx="6" fill="#d8284a" />
          <circle cx="14" cy="14" r="10.5" fill="#fff" />
          <path d="M9 10l5 9 5-8" fill="none" stroke="#d8284a" strokeWidth="3.5" strokeLinecap="round" />
          <circle cx="14" cy="10" r="2" fill="#fff" />
        </svg>
      </PinnedApp>
      <PinnedApp label="Yandex">
        <svg width="30" height="30" viewBox="0 0 30 30"><circle cx="15" cy="15" r="15" fill="#f2f2f2" /><path d="M6 8l9 8 9-8M15 15v12" fill="none" stroke="#cc1030" strokeWidth="3.5" /></svg>
      </PinnedApp>
      <PinnedApp label="Far">
        <svg width="30" height="28" viewBox="0 0 30 28">
          <path d="M0 0h29v26H0z" fill="#0a10c8" />
          <path d="M0 .5h29M0 22.500h29M.5 0v26M14.500 0v24M24.500 0v22M28.500 0v26M0 27h29" stroke="#20b8f0" />
          <path d="M2 3.500h8M2 6.500h11M2 9.500h9M16 3.500h7M16 6.500h7M26 3.500h3M26 6.500h3" stroke="#30c8f8" />
          <path d="M10.500 10v12M19.500 10v12" stroke="#1060d8" />
        </svg>
      </PinnedApp>
      <RunningApp
        label="Провод..."
        icon={
          <svg width="29" height="24" viewBox="0 0 29 24" aria-hidden="true">
            <path d="M1 1h11l2 2h14v20H1z" fill="#f6dd84" />
            <path d="M1 7h27v16H1z" fill="#fbe9a4" />
            <path d="M6 23V13h18v10h-5v-5h-8v5z" fill="#40b4d4" />
          </svg>
        }
      />
      <PinnedApp label="Outlook">
        <svg width="28" height="28" viewBox="0 0 28 28">
          <path d="M13 7h15v14H13z" fill="#fff" stroke="#1272c0" />
          <path d="M15 8l6 6 7-7" fill="none" stroke="#1272c0" strokeWidth="1.5" />
          <path d="M0 3l17-3v28L0 25z" fill="#1272c0" />
          <ellipse cx="8" cy="14" rx="3.5" ry="4.5" fill="none" stroke="#fff" strokeWidth="2.5" />
        </svg>
      </PinnedApp>
      {running.map((app) => <RunningApp key={app.label} {...app} />)}
      <div className="mt-[38px] flex h-[21px] items-stretch justify-between bg-[#f0f1f0] text-[#444]">
        <button aria-label="Влево" className="w-[21px] pl-[2px]"><ChevronLeft size={15} strokeWidth={3} /></button>
        <div className="mr-auto w-[43px] bg-[#cacaca]" />
        <button aria-label="Вправо" className="w-[19px]"><ChevronRight size={15} strokeWidth={3} /></button>
      </div>
      <div className="mt-[7px] ml-[26px] flex items-center">
        <div className="flex h-6 w-[73px] items-center justify-center border border-white bg-linear-to-b from-[#2484c8] to-[#0d4a80] text-[16px]">0:14</div>
        <div className="h-[14px] w-[3px] border border-l-0 border-white" />
      </div>
      <button aria-label="Показать скрытые значки" className="mt-[6px] ml-[9px] w-6">
        <svg width="24" height="18" viewBox="0 0 24 18"><path d="M15 1l-8 8 8 8" fill="none" stroke="#fff" strokeWidth="1.5" /></svg>
      </button>
      <div className="mt-[11px] grid grid-cols-4 items-center justify-items-center gap-y-[10px] pl-[5px]">
        <svg width="16" height="18" viewBox="0 0 16 18"><path d="M.5 1.500h15v15H.5z" fill="#333a35" stroke="#777" /><path d="M4 2v14M8 2v14M12 2v14M1 6h14M1 10h14M1 14h14" stroke="#464c48" /></svg>
        <svg width="20" height="20" viewBox="0 0 20 20"><circle cx="10" cy="10" r="8.5" fill="none" stroke="#c8304c" strokeWidth="3" /><circle cx="7" cy="10" r="1.5" fill="#c8304c" /><circle cx="13" cy="10" r="1.5" fill="#c8304c" /></svg>
        <svg width="18" height="18" viewBox="0 0 18 18"><path d="M9 8C3 7 3 1 7 2c3 1 3 3 1 5l-1 1c5 0 5 3 3 5-2 3-5 3-6 1" fill="none" stroke="#eee" strokeWidth="3" /></svg>
        <svg width="20" height="20" viewBox="0 0 20 20"><path d="M0 0h20v20H0z" fill="#404842" /><path d="M17 5H6L2 8l3 3v8M9 9h8l-3 6-4 2" fill="none" stroke="#7cc828" strokeWidth="3" /></svg>
        <svg width="20" height="14" viewBox="0 0 20 14"><path d="M6 4h12v8H5V8M19 6v4" fill="#fff" stroke="#fff" /><path d="M1 1v3h4V1M3 4v9h3" fill="none" stroke="#fff" strokeWidth="1.5" /></svg>
        <svg width="20" height="18" viewBox="0 0 20 18" fill="none" stroke="#777" strokeWidth="1.5"><path d="M6 8c2-4 7-7 13-7M9 11c2-3 5-5 10-5M12 14c1-2 4-3 7-3" /><circle cx="5.5" cy="12" r="5" fill="#c81838" stroke="none" /><path d="M3.500 10l4 4M7.500 10l-4 4" stroke="#fff" /></svg>
        <svg width="20" height="16" viewBox="0 0 20 16" fill="none" stroke="#fff" strokeWidth="1.2"><path d="M1 5h2l4-4v14l-4-4H1zM10 5c1 2 1 4 0 6M13 3c2 3 2 7 0 10M16 1c3 4 3 10 0 14" /></svg>
        <svg width="18" height="16" viewBox="0 0 18 16" fill="#a8aca8"><path d="M5 0l4 3-4 3-4-3zM13 0l4 3-4 3-4-3zM5 6l4 3-4 3-4-3zM13 6l4 3-4 3-4-3zM9 10l4 3-4 3-4-3z" /></svg>
      </div>
      <div className="mt-[18px] flex flex-col items-center text-[14px] leading-[22px]">
        <button>РУС</button>
        <time className="mt-[26px] flex flex-col items-center" dateTime="2018-10-02T09:27">
          <span>9:27</span>
          <span>вторник</span>
          <span>02.10.2018</span>
        </time>
      </div>
      <button aria-label="Уведомления" className="mt-[22px] flex justify-center">
        <svg width="22" height="21" viewBox="0 0 22 21"><path d="M1 1h20v16h-7l-3 3-3-3H1z" fill="none" stroke="#fff" strokeWidth="1.5" /></svg>
      </button>
      <div className="mt-auto mb-[5px] h-px bg-[#4a534c]" />
    </aside>
  );
}

export default function App() {
  return (
    <div className="flex h-screen overflow-hidden bg-[#f0f0f0] font-['Open_Sans','Noto_Sans',sans-serif]">
      <div className="flex min-w-0 flex-1 flex-col">
        <TitleBar />
        <RibbonTabs />
        <Ribbon />
        <div className="flex min-h-0 flex-1">
          <ClassLibrary />
          <Workspace />
        </div>
        <footer className="flex h-[25px] shrink-0 items-center justify-end bg-[#5ea7b6] pt-[2px] text-[14px] text-white">
          <span className="mr-[150px]">0.0000</span>
          <span className="flex gap-[5px] pr-[2px] text-[#a2d0da]">
            <span>OVR</span>
            <span>CAP</span>
            <span>NUM</span>
            <span>SCRL</span>
          </span>
        </footer>
      </div>
      <Taskbar />
    </div>
  );
}
